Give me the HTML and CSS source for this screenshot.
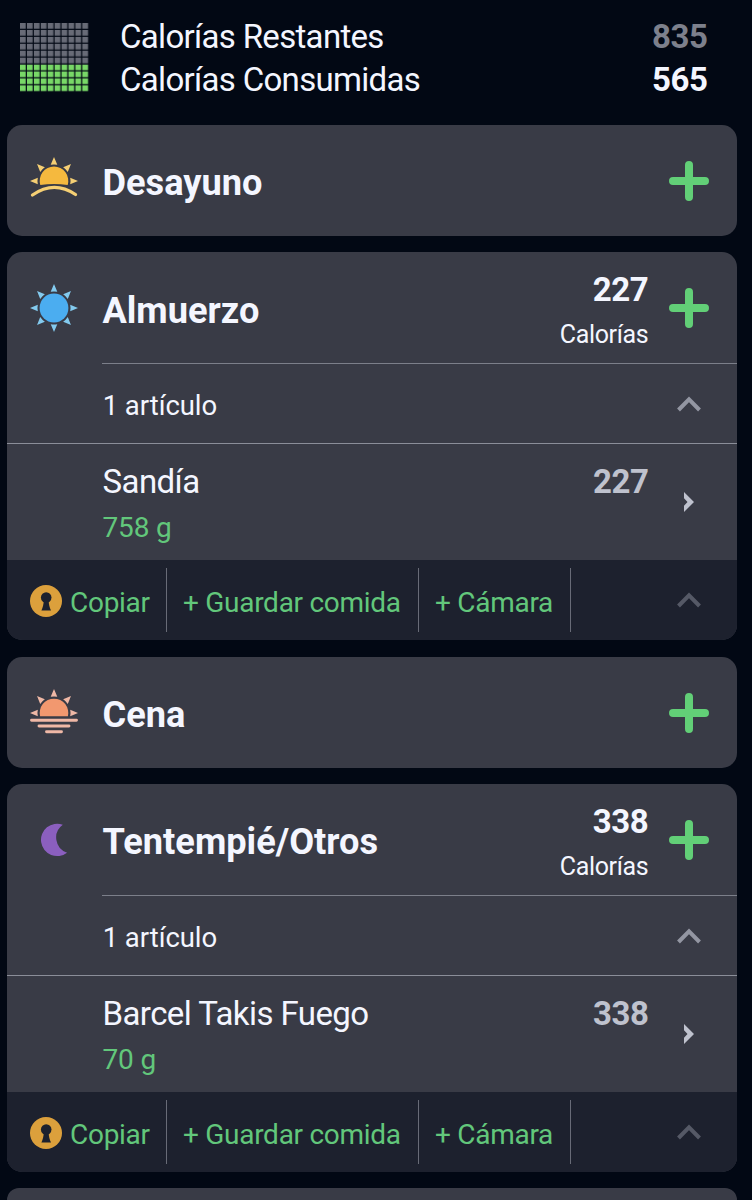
FILE: index.html
```html
<!DOCTYPE html>
<html lang="es">
<head>
<meta charset="utf-8">
<title>Diario de comidas</title>
<link rel="stylesheet" href="styles.css">
</head>
<body>
<svg class="defs" aria-hidden="true">
  <defs>
    <path id="ray" d="M0-24 3.300-16.200Q0-16.900-3.300-16.200Z"/>
    <g id="upper-rays">
      <use href="#ray"/>
      <use href="#ray" transform="rotate(45)"/>
      <use href="#ray" transform="rotate(90)"/>
      <use href="#ray" transform="rotate(-45)"/>
      <use href="#ray" transform="rotate(-90)"/>
    </g>
    <symbol id="plus" viewBox="0 0 40 40"><path d="M20 4V36M4 20H36" stroke="currentColor" stroke-width="8" stroke-linecap="round"/></symbol>
    <symbol id="up" viewBox="0 0 24 16"><path d="M1.500 14 12 3.300 22.500 14" fill="none" stroke="currentColor" stroke-width="4"/></symbol>
    <symbol id="lock" viewBox="0 0 32 32"><circle cx="16" cy="16" r="16" fill="#dca03c"/><g fill="#1d212e"><circle cx="16.200" cy="12.500" r="5.300"/><path d="M13.800 15H18.600C18.700 19 19.600 22.500 21 25.600H11.400C12.800 22.500 13.700 19 13.800 15Z"/></g></symbol>
  </defs>
</svg>

<header class="summary">
  <svg class="meter" viewBox="0 0 69 69">
    <defs>
      <pattern id="grey" width="6.93" height="6.93" patternUnits="userSpaceOnUse"><rect width="5.700" height="5.700" fill="#686b77"/></pattern>
      <pattern id="green" width="6.93" height="6.93" patternUnits="userSpaceOnUse"><rect width="5.700" height="5.700" fill="#78d867"/></pattern>
    </defs>
    <rect width="69" height="41.300" fill="url(#grey)"/>
    <rect y="41.300" width="69" height="27.700" fill="url(#green)"/>
  </svg>
  <div class="totals">
    <div class="total"><span>Calorías Restantes</span><b class="remaining">835</b></div>
    <div class="total"><span>Calorías Consumidas</span><b>565</b></div>
  </div>
</header>

<main class="meals">
  <section class="card">
    <div class="head">
      <svg class="meal-icon" viewBox="-24 -24 48 48"><use href="#upper-rays" fill="#f5cf74"/><path d="M-13.700 4A14.300 14.300 0 1 1 13.700 4Q0 1.800-13.700 4Z" fill="#f5b93e"/><path d="M-21.500 14Q0-1 21.500 13.500" fill="none" stroke="#f5cf74" stroke-width="3.300" stroke-linecap="round"/></svg>
      <h2 class="title">Desayuno</h2>
      <svg class="plus"><use href="#plus"/></svg>
    </div>
  </section>

  <section class="card">
    <div class="head">
      <svg class="meal-icon" viewBox="-24 -24 48 48"><g fill="#83caee"><use href="#upper-rays"/><use href="#ray" transform="rotate(135)"/><use href="#ray" transform="rotate(180)"/><use href="#ray" transform="rotate(225)"/></g><circle r="14.400" fill="#4badf0"/></svg>
      <h2 class="title">Almuerzo</h2>
      <div class="calories"><b>227</b><span class="unit">Calorías</span></div>
      <svg class="plus"><use href="#plus"/></svg>
    </div>
    <div class="count"><span>1 artículo</span><svg class="up"><use href="#up"/></svg></div>
    <div class="item">
      <div class="food"><div class="name">Sandía</div><div class="amount">758 g</div></div>
      <b class="value">227</b>
      <svg class="next" viewBox="0 0 12 20"><path d="M1 0 11 10 1 20V13.800L4.500 10 1 6.200Z" fill="#bfc2ce"/></svg>
    </div>
    <footer class="actions">
      <div class="action copy"><svg class="lock"><use href="#lock"/></svg><span>Copiar</span></div>
      <div class="action save"><span>+ Guardar comida</span></div>
      <div class="action camera"><span>+ Cámara</span></div>
      <svg class="up dim"><use href="#up"/></svg>
    </footer>
  </section>

  <section class="card">
    <div class="head">
      <svg class="meal-icon dusk" viewBox="-24 -24 48 48"><use href="#upper-rays" fill="#efb8a6"/><path d="M-13.900 3.300A14.300 14.300 0 1 1 13.900 3.300Z" fill="#f2986f"/><path d="M-22.500 7.300H22.500M-15 13H15M-7.500 18.800H7.500" stroke="#efb8a6" stroke-width="2.900" stroke-linecap="round"/></svg>
      <h2 class="title">Cena</h2>
      <svg class="plus dusk"><use href="#plus"/></svg>
    </div>
  </section>

  <section class="card">
    <div class="head">
      <svg class="meal-icon" viewBox="-24 -24 48 48"><path d="M8.800-15.300A16.200 16.200 0 1 0 13.100 12.700A15.900 15.900 0 0 1 8.800-15.300Z" fill="#8b5fbf"/></svg>
      <h2 class="title">Tentempié/Otros</h2>
      <div class="calories"><b>338</b><span class="unit">Calorías</span></div>
      <svg class="plus"><use href="#plus"/></svg>
    </div>
    <div class="count"><span>1 artículo</span><svg class="up"><use href="#up"/></svg></div>
    <div class="item">
      <div class="food"><div class="name">Barcel Takis Fuego</div><div class="amount">70 g</div></div>
      <b class="value">338</b>
      <svg class="next" viewBox="0 0 12 20"><path d="M1 0 11 10 1 20V13.800L4.500 10 1 6.200Z" fill="#bfc2ce"/></svg>
    </div>
    <footer class="actions">
      <div class="action copy"><svg class="lock"><use href="#lock"/></svg><span>Copiar</span></div>
      <div class="action save"><span>+ Guardar comida</span></div>
      <div class="action camera"><span>+ Cámara</span></div>
      <svg class="up dim"><use href="#up"/></svg>
    </footer>
  </section>

  <section class="card partial"></section>
</main>
</body>
</html>
```
FILE: styles.css
```css
* { box-sizing: border-box; }

body {
  display: flex;
  flex-direction: column;
  margin: 0;
  height: 1200px;
  overflow: hidden;
  background: #020814;
  color: #f4f6ff;
  font-family: Roboto, sans-serif;
}

svg { display: block; flex: none; }
b { font-weight: 700; }
.defs { position: absolute; width: 0; height: 0; }

.summary {
  display: flex;
  flex: none;
  height: 125.200px;
  padding: 15px 44.500px 0 20px;
}
.meter { width: 69px; height: 69px; margin: 7.500px 31px 0 0; }
.totals { flex: 1; }
.total {
  display: flex;
  justify-content: space-between;
  height: 43px;
  font-size: 33px;
  line-height: 43px;
  letter-spacing: -0.680px;
}
.total b { letter-spacing: -0.400px; }
.total .remaining { color: #7d808c; }

.meals {
  display: flex;
  flex: 1;
  flex-direction: column;
  gap: 16.300px;
  min-height: 0;
  width: 730.500px;
  margin-left: 6.500px;
}
.card {
  flex: none;
  overflow: hidden;
  border-radius: 15px;
  background: #393b46;
}
.partial { flex: 1; border-radius: 15px 15px 0 0; }
.head {
  display: flex;
  align-items: center;
  height: 111px;
  padding: 0 28.200px 0 23.700px;
}
.meal-icon { width: 48px; height: 48px; }
.dusk { margin-top: 1px; }
.title {
  flex: 1;
  margin: 5.500px 0 0 24.300px;
  font-size: 36.200px;
  line-height: 42px;
  font-weight: 700;
}
.calories {
  display: flex;
  flex-direction: column;
  align-items: flex-end;
  margin: 9px 20.500px 0 0;
  font-size: 33px;
  line-height: 45px;
  letter-spacing: -0.400px;
}
.unit { font-size: 25px; letter-spacing: -0.350px; }
.plus { width: 40px; height: 40px; color: #62cf77; }

.count {
  position: relative;
  display: flex;
  align-items: center;
  justify-content: space-between;
  height: 80px;
  padding: 4px 36px 0 96.200px;
  font-size: 27.500px;
  letter-spacing: -0.050px;
}
.count span { padding-top: 1px; }
.count .up { margin-bottom: 3px; }
.count::before {
  content: "";
  position: absolute;
  top: 0;
  left: 95px;
  right: 0;
  height: 1px;
  background: #7c7f8a;
}

.up { width: 24px; height: 16px; color: #9396a2; }
.dim { margin-left: auto; color: #555966; }

.item {
  display: flex;
  height: 117px;
  padding: 14px 42px 0 96px;
  border-top: 1px solid #8b8e99;
}
.food { flex: 1; }
.name { font-size: 33px; line-height: 47px; letter-spacing: -0.580px; }
.amount { color: #62c77b; font-size: 28px; line-height: 45px; letter-spacing: -0.150px; }
.value { color: #bfc2ce; font-size: 33px; line-height: 47px; letter-spacing: -0.400px; }
.next { width: 12px; height: 20px; margin: 33.500px 0 0 34.500px; }

.actions {
  display: flex;
  align-items: center;
  height: 80px;
  padding: 0 36px 0 23.500px;
  background: #1d212e;
  color: #62c77b;
  font-size: 28px;
  letter-spacing: -0.280px;
}
.action {
  display: flex;
  align-items: center;
  height: 64px;
  padding-left: 16.500px;
  border-right: 1.500px solid #686b77;
  white-space: nowrap;
}
.action span { padding-top: 4px; }
.copy { width: 136.500px; gap: 8px; padding-left: 0; }
.save { width: 252px; }
.camera { width: 152px; }
.lock { width: 32px; height: 32px; margin-top: 1px; }
```
